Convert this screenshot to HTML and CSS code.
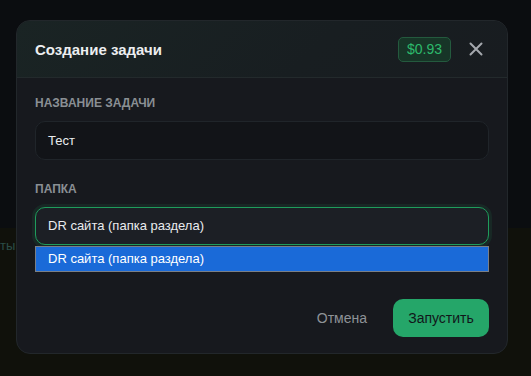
FILE: index.html
```html
<!DOCTYPE html>
<html>

<head>
  <title>Создание задачи</title>
  <link rel="stylesheet" href="styles.css">
</head>

<body>
  <div class="page">
    <div class="page-top"></div>
    <div class="page-bottom">
      <span class="page-text">ты</span>
    </div>
  </div>

  <div class="modal">
    <div class="modal-header">
      <h2 class="modal-title">Создание задачи</h2>
      <div class="header-right">
        <span class="cost">$0.93</span>
        <button class="close" aria-label="Закрыть">
          <svg width="14" height="14" viewBox="0 0 14 14">
            <path d="M1.5 1.5 L12.5 12.5 M12.5 1.5 L1.5 12.5" stroke="#a4a8ad" stroke-width="2" stroke-linecap="round" />
          </svg>
        </button>
      </div>
    </div>

    <div class="modal-body">
      <div class="field">
        <label class="label">Название задачи</label>
        <div class="input">Тест</div>
      </div>

      <div class="field">
        <label class="label">Папка</label>
        <div class="select">DR сайта (папка раздела)</div>
        <div class="dropdown">
          <div class="option">DR сайта (папка раздела)</div>
        </div>
      </div>
    </div>

    <div class="modal-footer">
      <button class="btn-cancel">Отмена</button>
      <button class="btn-run">Запустить</button>
    </div>
  </div>
</body>

</html>
```

FILE: styles.css
```css
body {
  margin: 0;
  font-family: "Liberation Sans", Arial, sans-serif;
  background: #0b0d10;
  width: 531px;
  height: 376px;
  overflow: hidden;
  position: relative;
}

/* page behind the overlay */
.page {
  display: flex;
  flex-direction: column;
  height: 376px;
}

.page-top {
  height: 228px;
  background: #0b0d10;
}

.page-bottom {
  flex: 1;
  background: #10110b;
  padding-top: 10px;
}

.page-text {
  display: block;
  margin-left: 0;
  font-size: 13px;
  color: #2b4d47;
}

/* modal */
.modal {
  position: absolute;
  left: 16px;
  top: 20px;
  width: 490px;
  height: 332px;
  background: #17191e;
  border: 1px solid #22272b;
  border-radius: 14px;
  display: flex;
  flex-direction: column;
  overflow: hidden;
}

.modal-header {
  height: 56px;
  padding: 0 18px;
  display: flex;
  align-items: center;
  justify-content: space-between;
  border-bottom: 1px solid #232a2c;
  background: linear-gradient(135deg, #1a2424 0%, #181e21 60%, #181c20 100%);
}

.modal-title {
  margin: 0;
  font-size: 15px;
  font-weight: bold;
  color: #eceef0;
}

.header-right {
  display: flex;
  align-items: center;
  gap: 11px;
}

.cost {
  display: inline-block;
  height: 23px;
  line-height: 23px;
  padding: 0 8px;
  background: #173527;
  border: 1px solid #245a3e;
  border-radius: 5px;
  font-size: 14px;
  color: #2dba6c;
}

.close {
  width: 27px;
  height: 27px;
  padding: 0;
  background: none;
  border: none;
  display: flex;
  align-items: center;
  justify-content: center;
}

.modal-body {
  padding: 18px 18px 0;
  flex: 1;
}

.field {
  margin-bottom: 22px;
}

.label {
  display: block;
  font-size: 12px;
  line-height: 15px;
  font-weight: bold;
  text-transform: uppercase;
  color: #8a8f94;
  margin-bottom: 10px;
}

.input {
  height: 37px;
  line-height: 37px;
  padding: 0 12px;
  background: #121418;
  border: 1px solid #20252a;
  border-radius: 10px;
  font-size: 13px;
  color: #e9ebee;
}

.select {
  height: 36px;
  line-height: 36px;
  padding: 0 12px;
  background: #1c1f25;
  border: 1.5px solid #1f9c5c;
  border-radius: 10px;
  box-shadow: 0 0 0 3px rgba(31, 156, 92, 0.12);
  font-size: 13px;
  color: #e9ebee;
}

.dropdown {
  margin-top: 1px;
  border: 1px solid #7a7f86;
  background: #1a6ad8;
}

.option {
  height: 24px;
  line-height: 24px;
  padding: 0 12px;
  font-size: 13px;
  color: #ffffff;
}

.modal-footer {
  display: flex;
  justify-content: flex-end;
  align-items: center;
  gap: 10px;
  padding: 0 18px 16px;
}

.btn-cancel {
  height: 38px;
  padding: 0 16px;
  background: none;
  border: none;
  font-family: inherit;
  font-size: 14px;
  color: #8e9297;
}

.btn-run {
  height: 38px;
  width: 96px;
  background: #25a669;
  border: none;
  border-radius: 10px;
  font-family: inherit;
  font-size: 14px;
  color: #11161a;
}
```
